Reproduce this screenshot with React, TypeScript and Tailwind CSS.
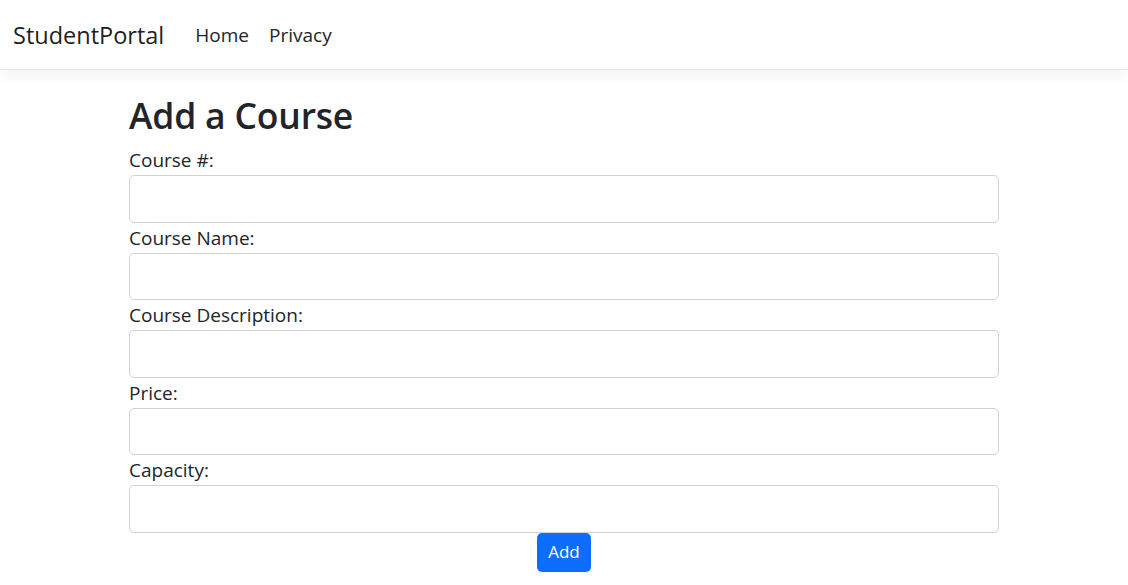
import React from "react";

const fields = [
  "Course #:",
  "Course Name:",
  "Course Description:",
  "Price:",
  "Capacity:",
];

const App = () => {
  return (
    <div className="min-h-screen bg-white text-[#212529] font-['Open_Sans','Noto_Sans',sans-serif]">
      <nav className="h-[70px] flex items-center px-[13px] bg-white border-b border-[#e5e5e5] shadow-[0_5px_15px_rgba(0,0,0,0.05)] mb-[21px]">
        <a href="#" className="text-[23.5px] leading-[38px] text-black/90 mr-[21px]">
          StudentPortal
        </a>
        <ul className="flex items-center">
          <li>
            <a href="#" className="block px-[10px] text-[19px] leading-[30px] text-[#212529]">
              Home
            </a>
          </li>
          <li>
            <a href="#" className="block px-[10px] text-[19px] leading-[30px] text-[#212529]">
              Privacy
            </a>
          </li>
        </ul>
      </nav>

      <main className="w-[900px] mx-auto px-[15px]">
        <h1 className="text-[35.5px] leading-[48px] font-semibold mb-[6px] tracking-[-0.2px]">Add a Course</h1>
        <form className="flex flex-col">
          {fields.map((label) => (
            <div key={label} className="flex flex-col">
              <label className="text-[19px] leading-[30px]">{label}</label>
              <input
                type="text"
                className="h-[47.5px] w-full rounded-[5px] border border-[#ced4da] px-[15px] text-[20px] outline-none"
              />
            </div>
          ))}
          <div className="flex justify-center">
            <button
              type="button"
              className="h-[39px] px-[11px] rounded-[5px] bg-[#0d6efd] text-white text-[17px] leading-[26px]"
            >
              Add
            </button>
          </div>
        </form>
      </main>
    </div>
  );
};

export default App;
